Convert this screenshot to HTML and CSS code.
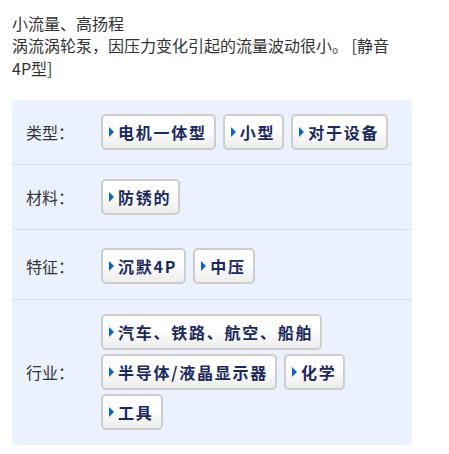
FILE: index.html
```html
<!DOCTYPE html>
<html lang="zh-CN">
<head>
  <meta charset="UTF-8">
  <meta name="viewport" content="width=device-width, initial-scale=1.0">
  <title>涡流涡轮泵</title>
  <link rel="stylesheet" href="styles.css">
</head>
<body>
  <div class="page">
    <p class="intro">小流量、高扬程<br>涡流涡轮泵，因压力变化引起的流量波动很小。 [静音4P型]</p>

    <div class="specs">
      <div class="spec-row">
        <div class="spec-label">类型：</div>
        <div class="tags">
          <a class="tag" href="#">电机一体型</a>
          <a class="tag" href="#">小型</a>
          <a class="tag" href="#">对于设备</a>
        </div>
      </div>
      <div class="spec-row">
        <div class="spec-label">材料：</div>
        <div class="tags">
          <a class="tag" href="#">防锈的</a>
        </div>
      </div>
      <div class="spec-row row-tall">
        <div class="spec-label">特征：</div>
        <div class="tags">
          <a class="tag" href="#">沉默4P</a>
          <a class="tag" href="#">中压</a>
        </div>
      </div>
      <div class="spec-row">
        <div class="spec-label">行业：</div>
        <div class="tags">
          <a class="tag" href="#">汽车、铁路、航空、船舶</a>
          <a class="tag" href="#">半导体/液晶显示器</a>
          <a class="tag" href="#">化学</a>
          <a class="tag" href="#">工具</a>
        </div>
      </div>
    </div>
  </div>
</body>
</html>
```

FILE: styles.css
```css
body {
  margin: 0;
  background: #fff;
  font-family: "Noto Sans CJK SC", "Noto Sans", sans-serif;
  color: #333;
}
.page {
  width: 400px;
  padding: 12px;
}
.intro {
  max-width: 395px;
  margin: 0 0 21px;
  font-size: 16px;
  line-height: 22.4px;
}
.specs {
  background: #ebf1fd;
}
.spec-row {
  display: grid;
  grid-template-columns: 75px 1fr;
  align-items: center;
  padding: 14px 6px 14px 14px;
  border-bottom: 1px solid #dadee6;
}
.spec-row:last-child {
  border-bottom: none;
  padding-bottom: 15px;
}
.row-tall {
  padding-top: 18px;
  padding-bottom: 15px;
}
.spec-label {
  font-size: 16px;
  color: #333;
}
.tags {
  display: flex;
  flex-wrap: wrap;
  gap: 4px 7px;
}
.tag {
  display: inline-flex;
  align-items: center;
  height: 36px;
  box-sizing: border-box;
  padding: 0 7px 0 6px;
  border: 2px solid #cdcdcd;
  border-radius: 5px;
  background: linear-gradient(#fff, #fff 40%, #ececec);
  color: #1b2a5e;
  font-size: 16px;
  font-weight: bold;
  letter-spacing: 1.75px;
  text-decoration: none;
}
.tag::before {
  content: "";
  border-left: 5px solid #0a64c6;
  border-top: 5px solid transparent;
  border-bottom: 5px solid transparent;
  margin-right: 4px;
}
```
